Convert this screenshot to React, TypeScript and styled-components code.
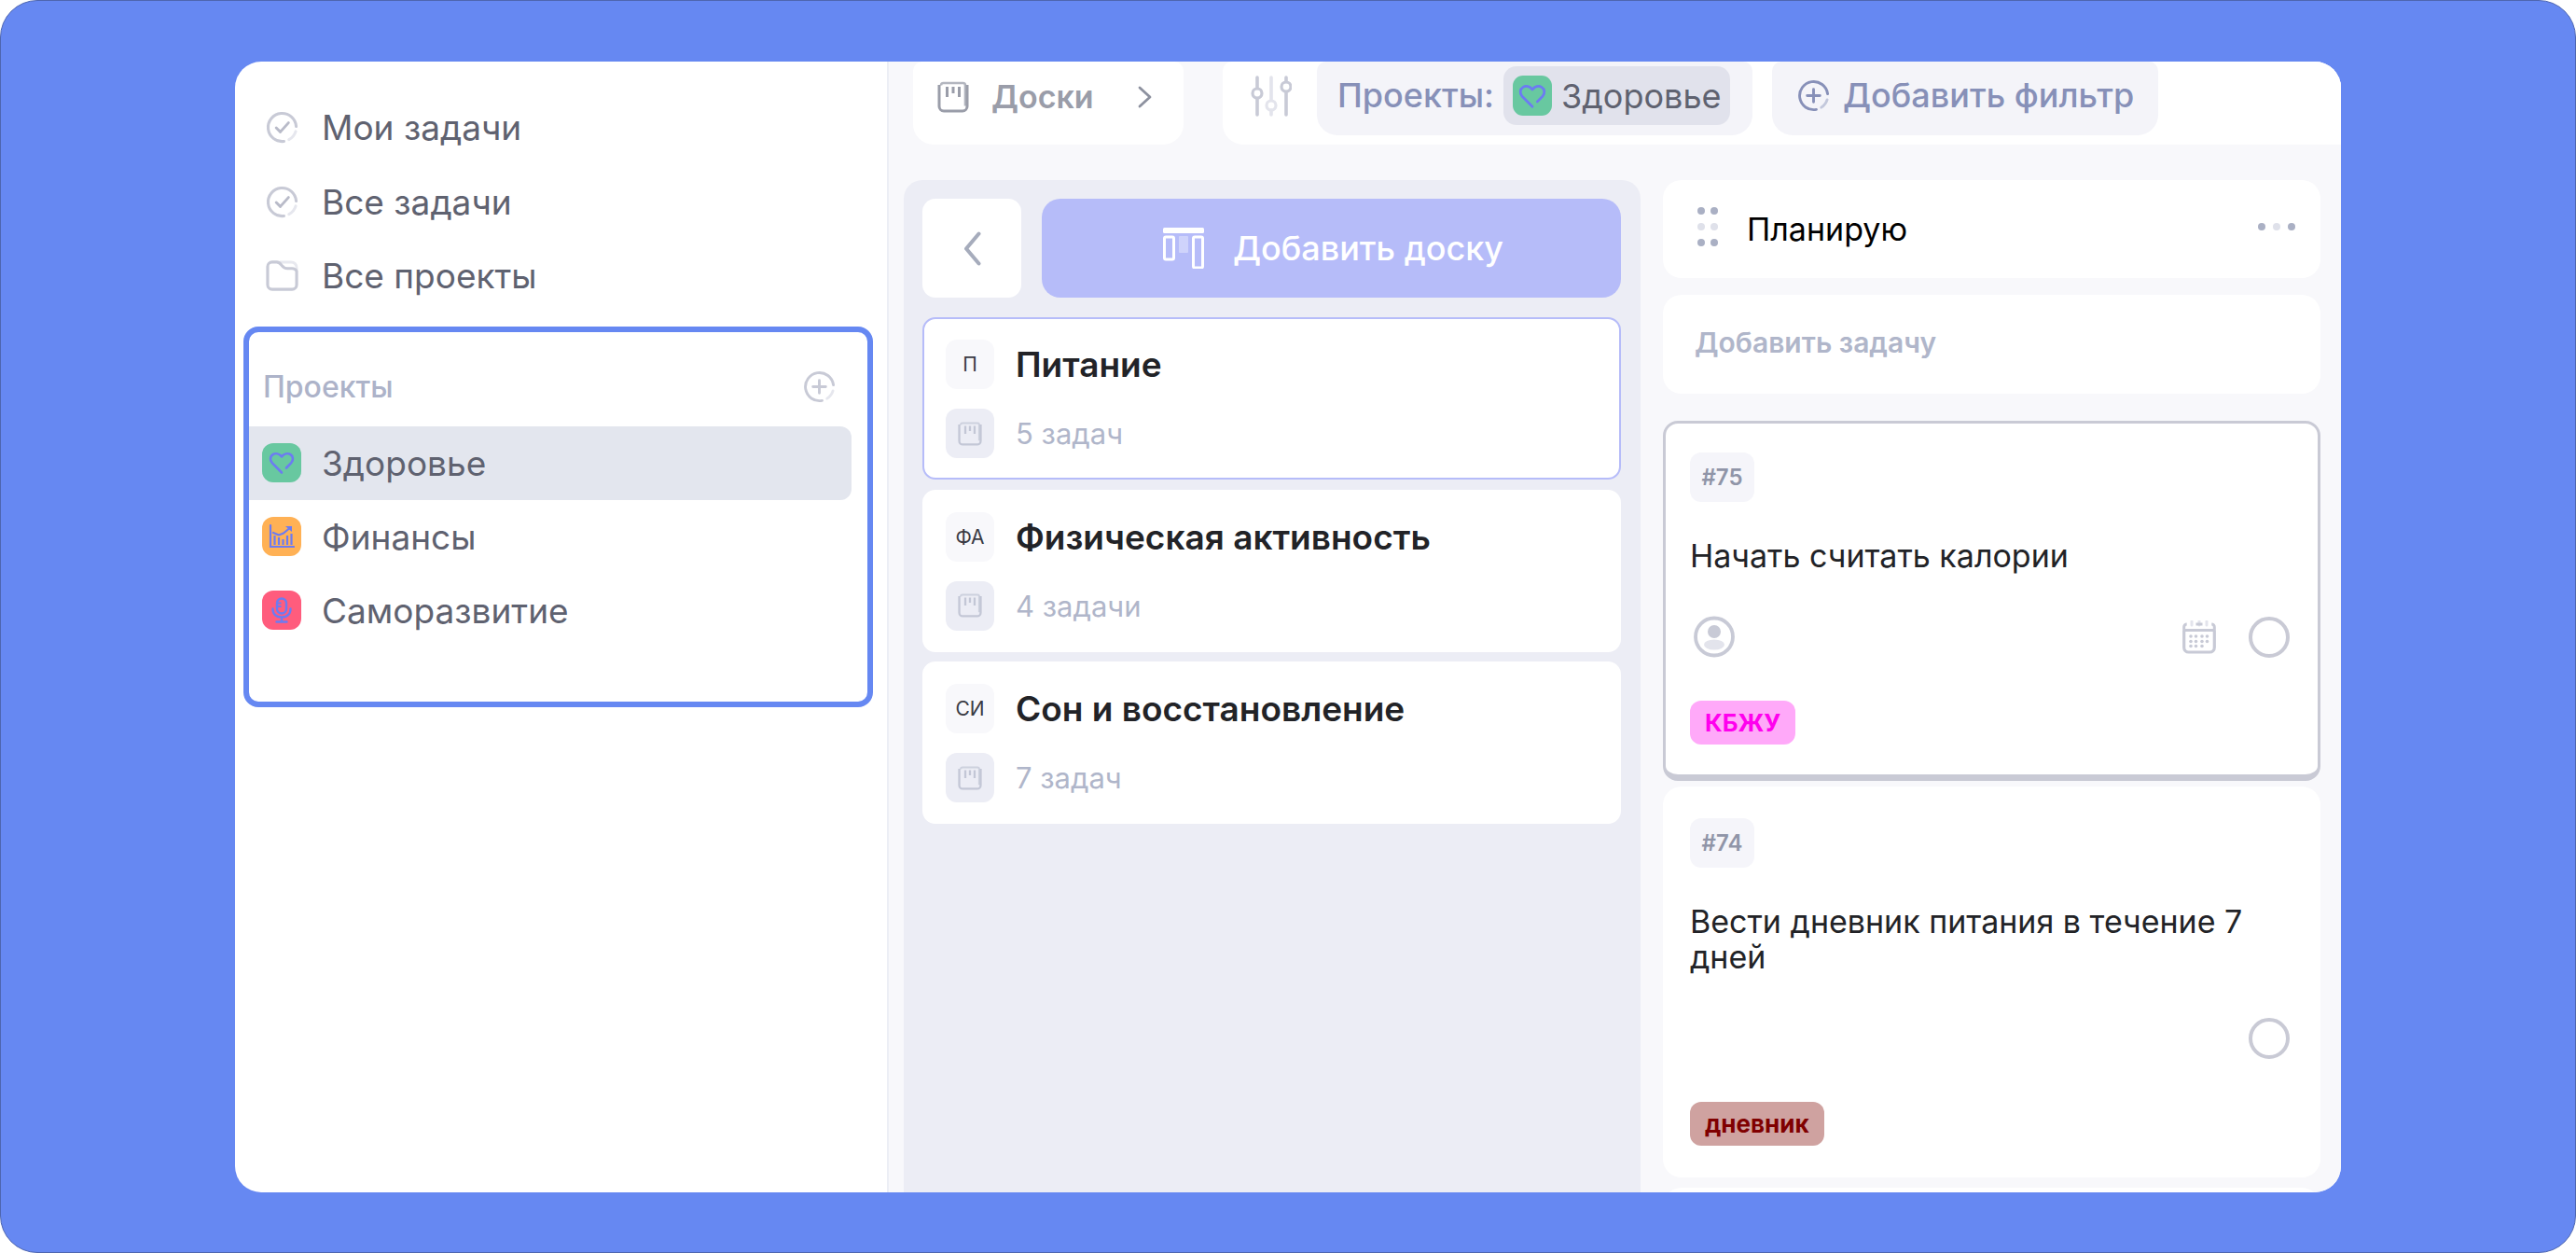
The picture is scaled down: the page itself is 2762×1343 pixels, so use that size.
import React from 'react';
import styled, { createGlobalStyle } from 'styled-components';

const GlobalStyle = createGlobalStyle`
  html, body {
    margin: 0;
    padding: 0;
    background: #ffffff;
  }
  * {
    box-sizing: border-box;
  }
  body {
    font-family: Inter, "Noto Sans", sans-serif;
  }
`;

const CheckIcon = () => (
  <NavSvg viewBox="0 0 36 36" fill="none">
    <path d="M33.500 17A15.500 15.500 0 1 0 20 33.400" stroke="#c8cad6" strokeWidth="3.200" strokeLinecap="round" />
    <path d="M33 22.500a15.500 15.500 0 0 1-7.500 9" stroke="#e6e7ee" strokeWidth="3.200" strokeLinecap="round" />
    <path d="M11.500 18.500l4.500 4.500 9-10" stroke="#b9bbc9" strokeWidth="3" strokeLinecap="round" strokeLinejoin="round" />
  </NavSvg>
);

const FolderIcon = () => (
  <NavSvg viewBox="0 0 36 36" fill="none">
    <path d="M15 3h13a6 6 0 0 1 6 6v3" stroke="#e8e9ef" strokeWidth="3" />
    <path d="M34 13v15a5 5 0 0 1-5 5H7a5 5 0 0 1-5-5V8a5 5 0 0 1 5-5h5c3 0 4 1.500 5.500 3.500S21 10 24 10h5c2.500 0 4 1 5 3z" stroke="#c8cad6" strokeWidth="3.200" strokeLinejoin="round" />
  </NavSvg>
);

const PlusIcon = ({ $color, $light, $size }: { $color: string; $light: string; $size: number }) => (
  <svg width={$size} height={$size} viewBox="0 0 36 36" fill="none">
    <path d="M33.500 16A15.500 15.500 0 1 0 21 33.300" stroke={$color} strokeWidth="3" strokeLinecap="round" />
    <path d="M33 22.500a15.500 15.500 0 0 1-6.500 8.500" stroke={$light} strokeWidth="3" strokeLinecap="round" />
    <path d="M18 11v14M11 18h14" stroke={$color} strokeWidth="3" strokeLinecap="round" />
  </svg>
);

const BoardIcon = ({ $color, $size }: { $color: string; $size: number }) => (
  <svg width={$size} height={$size} viewBox="0 0 34 34" fill="none">
    <path d="M4 4.500a2.500 2.500 0 0 1 2.500-2.500h21a2.500 2.500 0 0 1 2.500 2.500v22" stroke={$color} strokeWidth="2.600" opacity="0.75" />
    <path d="M2 4v23a5 5 0 0 0 5 5h20a5 5 0 0 0 5-5V4" stroke={$color} strokeWidth="3" />
    <path d="M10.500 6v11M17 6v7M23.500 6v11" stroke={$color} strokeWidth="3" />
  </svg>
);

const HeartIcon = ({ $size }: { $size: number }) => (
  <svg width={$size} height={$size} viewBox="0 0 28 28" fill="none">
    <path d="M14 24.500L3.800 14.200C1 11.200 1.600 6.800 4.800 5 7.600 3.400 11.400 4.200 14 7.400c2.600-3.200 6.400-4 9.200-2.400 3.200 1.800 3.800 6.200 1 9.200l-5.200 5.300" stroke="#6c7bf2" strokeWidth="2.600" strokeLinecap="round" strokeLinejoin="round" />
  </svg>
);

const ChartIcon = () => (
  <svg width="28" height="28" viewBox="0 0 28 28" fill="none">
    <path d="M2 2v23h25" stroke="#6c7bf2" strokeWidth="2.200" strokeLinecap="round" />
    <path d="M6.500 13v10M11 15v8M15.500 17v6M20 13v10M24.500 11v12" stroke="#6c7bf2" strokeWidth="2.200" />
    <path d="M5 10l6 2.500 5-2 6-5" stroke="#6c7bf2" strokeWidth="2.200" strokeLinecap="round" strokeLinejoin="round" />
    <path d="M18 3h7v6z" fill="#6c7bf2" />
  </svg>
);

const MicIcon = () => (
  <svg width="28" height="28" viewBox="0 0 28 28" fill="none">
    <rect x="9" y="1.500" width="10" height="16" rx="5" stroke="#6c7bf2" strokeWidth="2.400" />
    <path d="M9.500 6.500h4M9.500 10h4" stroke="#6c7bf2" strokeWidth="2" />
    <path d="M4.500 12.500c0 6 4 9 9.500 9s9.500-3 9.500-9M14 21.500V26M8.500 26.500h11" stroke="#6c7bf2" strokeWidth="2.400" strokeLinecap="round" />
  </svg>
);

const SlidersIcon = () => (
  <svg width="44" height="44" viewBox="0 0 44 44" fill="none">
    <path d="M7 2v11.500M7 24.500V42M38 2v4.500M38 17.500V42" stroke="#c8cad6" strokeWidth="3.600" strokeLinecap="round" />
    <path d="M22 2v24M22 37v5" stroke="#e3e4ec" strokeWidth="3.600" strokeLinecap="round" />
    <circle cx="7" cy="19" r="5" stroke="#c8cad6" strokeWidth="3.200" />
    <circle cx="22" cy="32" r="5" stroke="#e3e4ec" strokeWidth="3.200" />
    <circle cx="38" cy="12" r="5" stroke="#c8cad6" strokeWidth="3.200" />
  </svg>
);

const AddBoardIcon = () => (
  <svg width="44" height="44" viewBox="0 0 44 44" fill="none">
    <rect x="0" y="0" width="44" height="6" rx="1.500" fill="#ffffff" />
    <rect x="1.500" y="10" width="10" height="24" rx="1.500" stroke="#ffffff" strokeWidth="3" />
    <rect x="17" y="9" width="10" height="18" rx="1" fill="#cfd3fb" />
    <rect x="32.500" y="10" width="10" height="33" rx="1.500" stroke="#ffffff" strokeWidth="3" />
  </svg>
);

const calendarDots = [
  [9, 17], [14.500, 17], [21, 17], [26.500, 17],
  [9, 22.500], [14.500, 22.500], [21, 22.500], [26.500, 22.500],
  [9, 27.500], [14.500, 27.500], [21, 27.500],
];

const CalendarIcon = () => (
  <svg width="36" height="36" viewBox="0 0 36 36" fill="none">
    <path d="M10 1v4M18 1v4M26 1v4" stroke="#e3e4ec" strokeWidth="3" strokeLinecap="round" />
    <path d="M1.700 11v18a5 5 0 0 0 5 5h22.600a5 5 0 0 0 5-5V11" stroke="#c8cad6" strokeWidth="3.200" />
    <path d="M1.700 11V7a3 3 0 0 1 3-3M14.500 4h7M31.300 4a3 3 0 0 1 3 3v4M1.700 10.500h32.600" stroke="#c8cad6" strokeWidth="3" />
    {calendarDots.map(([cx, cy]) => (
      <circle key={`${cx}-${cy}`} cx={cx} cy={cy} r="1.800" fill="#c8cad6" />
    ))}
  </svg>
);

const AvatarIcon = () => (
  <svg width="44" height="45" viewBox="0 0 44 45" fill="none">
    <circle cx="22" cy="22.500" r="20" stroke="#c8cad6" strokeWidth="3.800" />
    <circle cx="22" cy="17" r="7" fill="#c8cad6" />
    <ellipse cx="22" cy="31" rx="11" ry="5.500" fill="#e3e4ec" />
  </svg>
);

const ChevronRight = () => (
  <svg width="15" height="24" viewBox="0 0 15 24" fill="none">
    <path d="M2 2l11 10L2 22" stroke="#8d919f" strokeWidth="2.800" strokeLinecap="round" strokeLinejoin="round" />
  </svg>
);

const ChevronLeft = () => (
  <svg width="19" height="37" viewBox="0 0 19 37" fill="none">
    <path d="M16.500 2.500L3 18.500l13.500 16" stroke="#a6acbc" strokeWidth="4" strokeLinecap="round" strokeLinejoin="round" />
  </svg>
);

const tasks = [
  { id: '#75', title: 'Начать считать калории', tag: 'КБЖУ', tagBg: '#ffa9f9', tagColor: '#ff00ee', active: true },
  { id: '#74', title: 'Вести дневник питания в течение 7 дней', tag: 'дневник', tagBg: '#cfa2a0', tagColor: '#800000', active: false },
];

const boards = [
  { short: 'П', title: 'Питание', count: '5 задач', selected: true },
  { short: 'ФА', title: 'Физическая активность', count: '4 задачи', selected: false },
  { short: 'СИ', title: 'Сон и восстановление', count: '7 задач', selected: false },
];

const App = () => (
  <>
    <GlobalStyle />
    <Frame>
      <Window>
        <Sidebar>
          <NavList>
            <NavRow><CheckIcon /><NavLabel>Мои задачи</NavLabel></NavRow>
            <NavRow><CheckIcon /><NavLabel>Все задачи</NavLabel></NavRow>
            <NavRow><FolderIcon /><NavLabel>Все проекты</NavLabel></NavRow>
          </NavList>
          <ProjectsBox>
            <ProjectsHeader>
              <ProjectsTitle>Проекты</ProjectsTitle>
              <PlusIcon $color="#c8cad6" $light="#e6e7ee" $size={35} />
            </ProjectsHeader>
            <ProjectRow $selected>
              <ProjectBadge $bg="#68c8a0"><HeartIcon $size={28} /></ProjectBadge>
              <NavLabel>Здоровье</NavLabel>
            </ProjectRow>
            <ProjectRow>
              <ProjectBadge $bg="#ffb155"><ChartIcon /></ProjectBadge>
              <NavLabel>Финансы</NavLabel>
            </ProjectRow>
            <ProjectRow>
              <ProjectBadge $bg="#ff5c7d"><MicIcon /></ProjectBadge>
              <NavLabel>Саморазвитие</NavLabel>
            </ProjectRow>
          </ProjectsBox>
        </Sidebar>
        <Main>
          <TopBar>
            <BoardsTab>
              <BoardIcon $color="#9a9da9" $size={34} />
              <BoardsTabLabel>Доски</BoardsTabLabel>
              <ChevronRight />
            </BoardsTab>
            <FilterBar>
              <SlidersIcon />
              <FilterPill>
                <FilterLabel>Проекты:</FilterLabel>
                <FilterChip>
                  <ChipBadge><HeartIcon $size={30} /></ChipBadge>
                  <ChipLabel>Здоровье</ChipLabel>
                </FilterChip>
              </FilterPill>
              <AddFilter>
                <PlusIcon $color="#8790b8" $light="#c3c8dc" $size={35} />
                <FilterLabel>Добавить фильтр</FilterLabel>
              </AddFilter>
            </FilterBar>
          </TopBar>
          <Content>
            <BoardsColumn>
              <Toolbar>
                <BackButton><ChevronLeft /></BackButton>
                <AddBoardButton>
                  <AddBoardIcon />
                  Добавить доску
                </AddBoardButton>
              </Toolbar>
              <BoardsList>
                {boards.map((board) => (
                  <BoardCard key={board.title} $selected={board.selected}>
                    <BoardRow>
                      <BoardAvatar>{board.short}</BoardAvatar>
                      <BoardTitle>{board.title}</BoardTitle>
                    </BoardRow>
                    <BoardRow>
                      <BoardMeta><BoardIcon $color="#c3c7d6" $size={26} /></BoardMeta>
                      <BoardCount>{board.count}</BoardCount>
                    </BoardRow>
                  </BoardCard>
                ))}
              </BoardsList>
            </BoardsColumn>
            <TasksColumn>
              <ColumnHeader>
                <DragHandle>
                  {[0, 1, 2, 3, 4, 5].map((i) => (
                    <Dot key={i} $light={i === 2 || i === 3} />
                  ))}
                </DragHandle>
                <ColumnTitle>Планирую</ColumnTitle>
                <MoreDots>
                  <Dot />
                  <Dot $light />
                  <Dot />
                </MoreDots>
              </ColumnHeader>
              <AddTask>Добавить задачу</AddTask>
              {tasks.map((task) => (
                <TaskCard key={task.id} $active={task.active}>
                  <TaskId>{task.id}</TaskId>
                  <TaskTitle>{task.title}</TaskTitle>
                  <TaskMeta>
                    {task.active && <AvatarIcon />}
                    <TaskMetaRight>
                      {task.active && <CalendarIcon />}
                      <StatusCircle />
                    </TaskMetaRight>
                  </TaskMeta>
                  <TaskTag $bg={task.tagBg} $color={task.tagColor}>{task.tag}</TaskTag>
                </TaskCard>
              ))}
              <TaskCard />
            </TasksColumn>
          </Content>
        </Main>
      </Window>
    </Frame>
  </>
);

const Frame = styled.div`
  width: 2762px;
  height: 1343px;
  padding: 65px 251px;
  background: #6688f2;
  border: 1px solid #4e66b0;
  border-radius: 40px;
  overflow: hidden;
`;

const Window = styled.div`
  display: flex;
  height: 1212px;
  background: #ffffff;
  border-radius: 28px;
  overflow: hidden;
`;

const Sidebar = styled.aside`
  width: 701px;
  flex: none;
  border-right: 2px solid #eceef5;
`;

const NavList = styled.nav`
  padding: 31px 0 0 33px;
`;

const NavRow = styled.div`
  display: flex;
  align-items: center;
  gap: 25px;
  height: 79.6px;
`;

const NavSvg = styled.svg`
  width: 35px;
  height: 35px;
  flex: none;
`;

const NavLabel = styled.span`
  font-size: 37px;
  color: #5f6270;
`;

const ProjectsBox = styled.section`
  width: 675px;
  height: 408px;
  margin: 14px 0 0 9px;
  border: 6px solid #6688f2;
  border-radius: 16px;
`;

const ProjectsHeader = styled.div`
  display: flex;
  align-items: center;
  justify-content: space-between;
  height: 101px;
  padding: 16px 34px 0 15px;
`;

const ProjectsTitle = styled.span`
  font-size: 32px;
  font-weight: 500;
  color: #adb3c9;
`;

const ProjectRow = styled.div<{ $selected?: boolean }>`
  display: flex;
  align-items: center;
  gap: 22px;
  width: 646px;
  height: 79px;
  padding-left: 14px;
  background: ${({ $selected }) => ($selected ? '#e3e6ee' : 'transparent')};
  border-radius: 0 12px 12px 0;
`;

const ProjectBadge = styled.div<{ $bg: string }>`
  display: flex;
  align-items: center;
  justify-content: center;
  width: 42px;
  height: 42px;
  flex: none;
  background: ${({ $bg }) => $bg};
  border-radius: 12px;
`;

const Main = styled.main`
  display: flex;
  flex-direction: column;
  flex: 1;
  min-width: 0;
  background: #f8f8fb;
`;

const TopBar = styled.header`
  display: flex;
  gap: 42px;
  height: 89px;
  flex: none;
  padding-left: 26px;
`;

const BoardsTab = styled.div`
  display: flex;
  align-items: center;
  width: 290px;
  padding: 0 34px 14px 26px;
  background: #ffffff;
  border-radius: 10px 10px 22px 22px;
`;

const BoardsTabLabel = styled.span`
  flex: 1;
  margin-left: 24px;
  font-size: 34px;
  font-weight: 600;
  color: #9a9da9;
`;

const FilterBar = styled.div`
  display: flex;
  flex: 1;
  gap: 21px;
  padding-left: 30px;
  background: #ffffff;
  border-radius: 10px 0 0 22px;
  & > svg {
    margin-top: 15px;
    margin-right: 6px;
  }
`;

const FilterPill = styled.div`
  display: flex;
  align-items: flex-start;
  gap: 10px;
  width: 467px;
  height: 79px;
  padding: 5px 22px 0;
  background: #f4f4f9;
  border-radius: 10px 10px 22px 22px;
`;

const FilterLabel = styled.span`
  font-size: 36px;
  font-weight: 500;
  line-height: 63px;
  color: #8790b8;
`;

const FilterChip = styled.div`
  display: flex;
  align-items: center;
  gap: 10px;
  height: 63px;
  padding: 0 10px;
  background: #e1e2ec;
  border-radius: 14px;
`;

const ChipBadge = styled.div`
  display: flex;
  align-items: center;
  justify-content: center;
  width: 42px;
  height: 43px;
  background: #68c8a0;
  border-radius: 11px;
`;

const ChipLabel = styled.span`
  font-size: 36px;
  color: #5f6270;
`;

const AddFilter = styled.div`
  display: flex;
  align-items: flex-start;
  gap: 14px;
  height: 79px;
  padding: 5px 26px 0 27px;
  background: #f4f4f9;
  border-radius: 10px 10px 22px 22px;
  & > svg {
    margin-top: 14px;
  }
`;

const Content = styled.div`
  display: flex;
  flex: 1;
  min-height: 0;
  gap: 24px;
  padding: 38px 22px 0 16px;
`;

const BoardsColumn = styled.section`
  width: 790px;
  flex: none;
  padding: 20px 21px 0 20px;
  background: #ecedf5;
  border-radius: 20px 20px 0 0;
`;

const Toolbar = styled.div`
  display: flex;
  gap: 22px;
`;

const BackButton = styled.button`
  display: flex;
  align-items: center;
  justify-content: center;
  width: 106px;
  height: 106px;
  padding: 0;
  background: #ffffff;
  border: none;
  border-radius: 14px;
`;

const AddBoardButton = styled.button`
  display: flex;
  align-items: center;
  justify-content: center;
  gap: 31px;
  flex: 1;
  height: 106px;
  padding: 0 0 0 4px;
  background: #b6bcf9;
  border: none;
  border-radius: 20px;
  font-family: inherit;
  font-size: 36px;
  font-weight: 500;
  color: #ffffff;
`;

const BoardsList = styled.div`
  display: flex;
  flex-direction: column;
  gap: 10.5px;
  margin-top: 21px;
`;

const BoardCard = styled.article<{ $selected?: boolean }>`
  display: flex;
  flex-direction: column;
  gap: 21px;
  height: 174px;
  padding: 22px 23px;
  background: #ffffff;
  border: 2px solid ${({ $selected }) => ($selected ? '#b6bcf9' : '#ffffff')};
  border-radius: 14px;
`;

const BoardRow = styled.div`
  display: flex;
  align-items: center;
  gap: 23px;
`;

const BoardAvatar = styled.div`
  display: flex;
  align-items: center;
  justify-content: center;
  width: 52px;
  height: 53px;
  flex: none;
  background: #f8f8fb;
  border-radius: 12px;
  font-size: 21px;
  color: #3a3b44;
`;

const BoardTitle = styled.span`
  font-size: 37px;
  font-weight: 600;
  color: #222327;
`;

const BoardMeta = styled(BoardAvatar)`
  background: #ecedf5;
`;

const BoardCount = styled.span`
  font-size: 31px;
  color: #b0b6ca;
`;

const TasksColumn = styled.section`
  display: flex;
  flex-direction: column;
  flex: 1;
  min-width: 0;
`;

const ColumnHeader = styled.div`
  display: flex;
  align-items: center;
  height: 105px;
  flex: none;
  padding: 0 27px 0 37px;
  background: #ffffff;
  border-radius: 20px;
`;

const DragHandle = styled.div`
  display: grid;
  grid-template-columns: repeat(2, 7px);
  gap: 9px 7px;
  margin: -6px 33px 0 0;
`;

const Dot = styled.span<{ $light?: boolean }>`
  width: 8px;
  height: 8px;
  background: ${({ $light }) => ($light ? '#dfe1ea' : '#aab0c4')};
  border-radius: 50%;
`;

const ColumnTitle = styled.span`
  flex: 1;
  margin-left: -1px;
  font-size: 34px;
  color: #000000;
`;

const MoreDots = styled.div`
  display: flex;
  gap: 8px;
  margin-top: -6px;
`;

const AddTask = styled.div`
  display: flex;
  align-items: center;
  height: 106px;
  flex: none;
  margin: 18px 0 29px;
  padding: 0 0 4px 34px;
  background: #ffffff;
  border-radius: 20px;
  font-size: 30px;
  font-weight: 600;
  color: #b0b6ca;
`;

const TaskCard = styled.article<{ $active?: boolean }>`
  flex: none;
  display: flex;
  flex-direction: column;
  align-items: flex-start;
  padding: ${({ $active }) => ($active ? '31px 26px 32px' : '34px 29px 34px')};
  margin-bottom: ${({ $active }) => ($active ? '6px' : '11px')};
  background: #ffffff;
  border: ${({ $active }) => ($active ? '3px solid #c9cad5' : 'none')};
  border-bottom-width: ${({ $active }) => ($active ? '7px' : '0')};
  border-radius: ${({ $active }) => ($active ? '16px' : '20px')};
`;

const TaskId = styled.div`
  display: flex;
  align-items: center;
  justify-content: center;
  width: 69px;
  height: 53px;
  background: #f5f5fa;
  border-radius: 12px;
  font-size: 24px;
  font-weight: 600;
  color: #9095a8;
`;

const TaskTitle = styled.div`
  margin-top: 39px;
  font-size: 34px;
  line-height: 38px;
  color: #222327;
`;

const TaskMeta = styled.div`
  display: flex;
  align-items: center;
  align-self: stretch;
  height: 45px;
  margin-top: 45px;
  padding: 0 4px;
`;

const TaskMetaRight = styled.div`
  display: flex;
  align-items: center;
  gap: 35px;
  margin-left: auto;
`;

const StatusCircle = styled.span`
  width: 44px;
  height: 44px;
  border: 4px solid #c9cad5;
  border-radius: 50%;
`;

const TaskTag = styled.div<{ $bg: string; $color: string }>`
  display: flex;
  align-items: center;
  height: 47px;
  margin-top: 46px;
  padding: 0 16px;
  background: ${({ $bg }) => $bg};
  border-radius: 12px;
  font-size: 26px;
  font-weight: 700;
  color: ${({ $color }) => $color};
`;

export default App;
